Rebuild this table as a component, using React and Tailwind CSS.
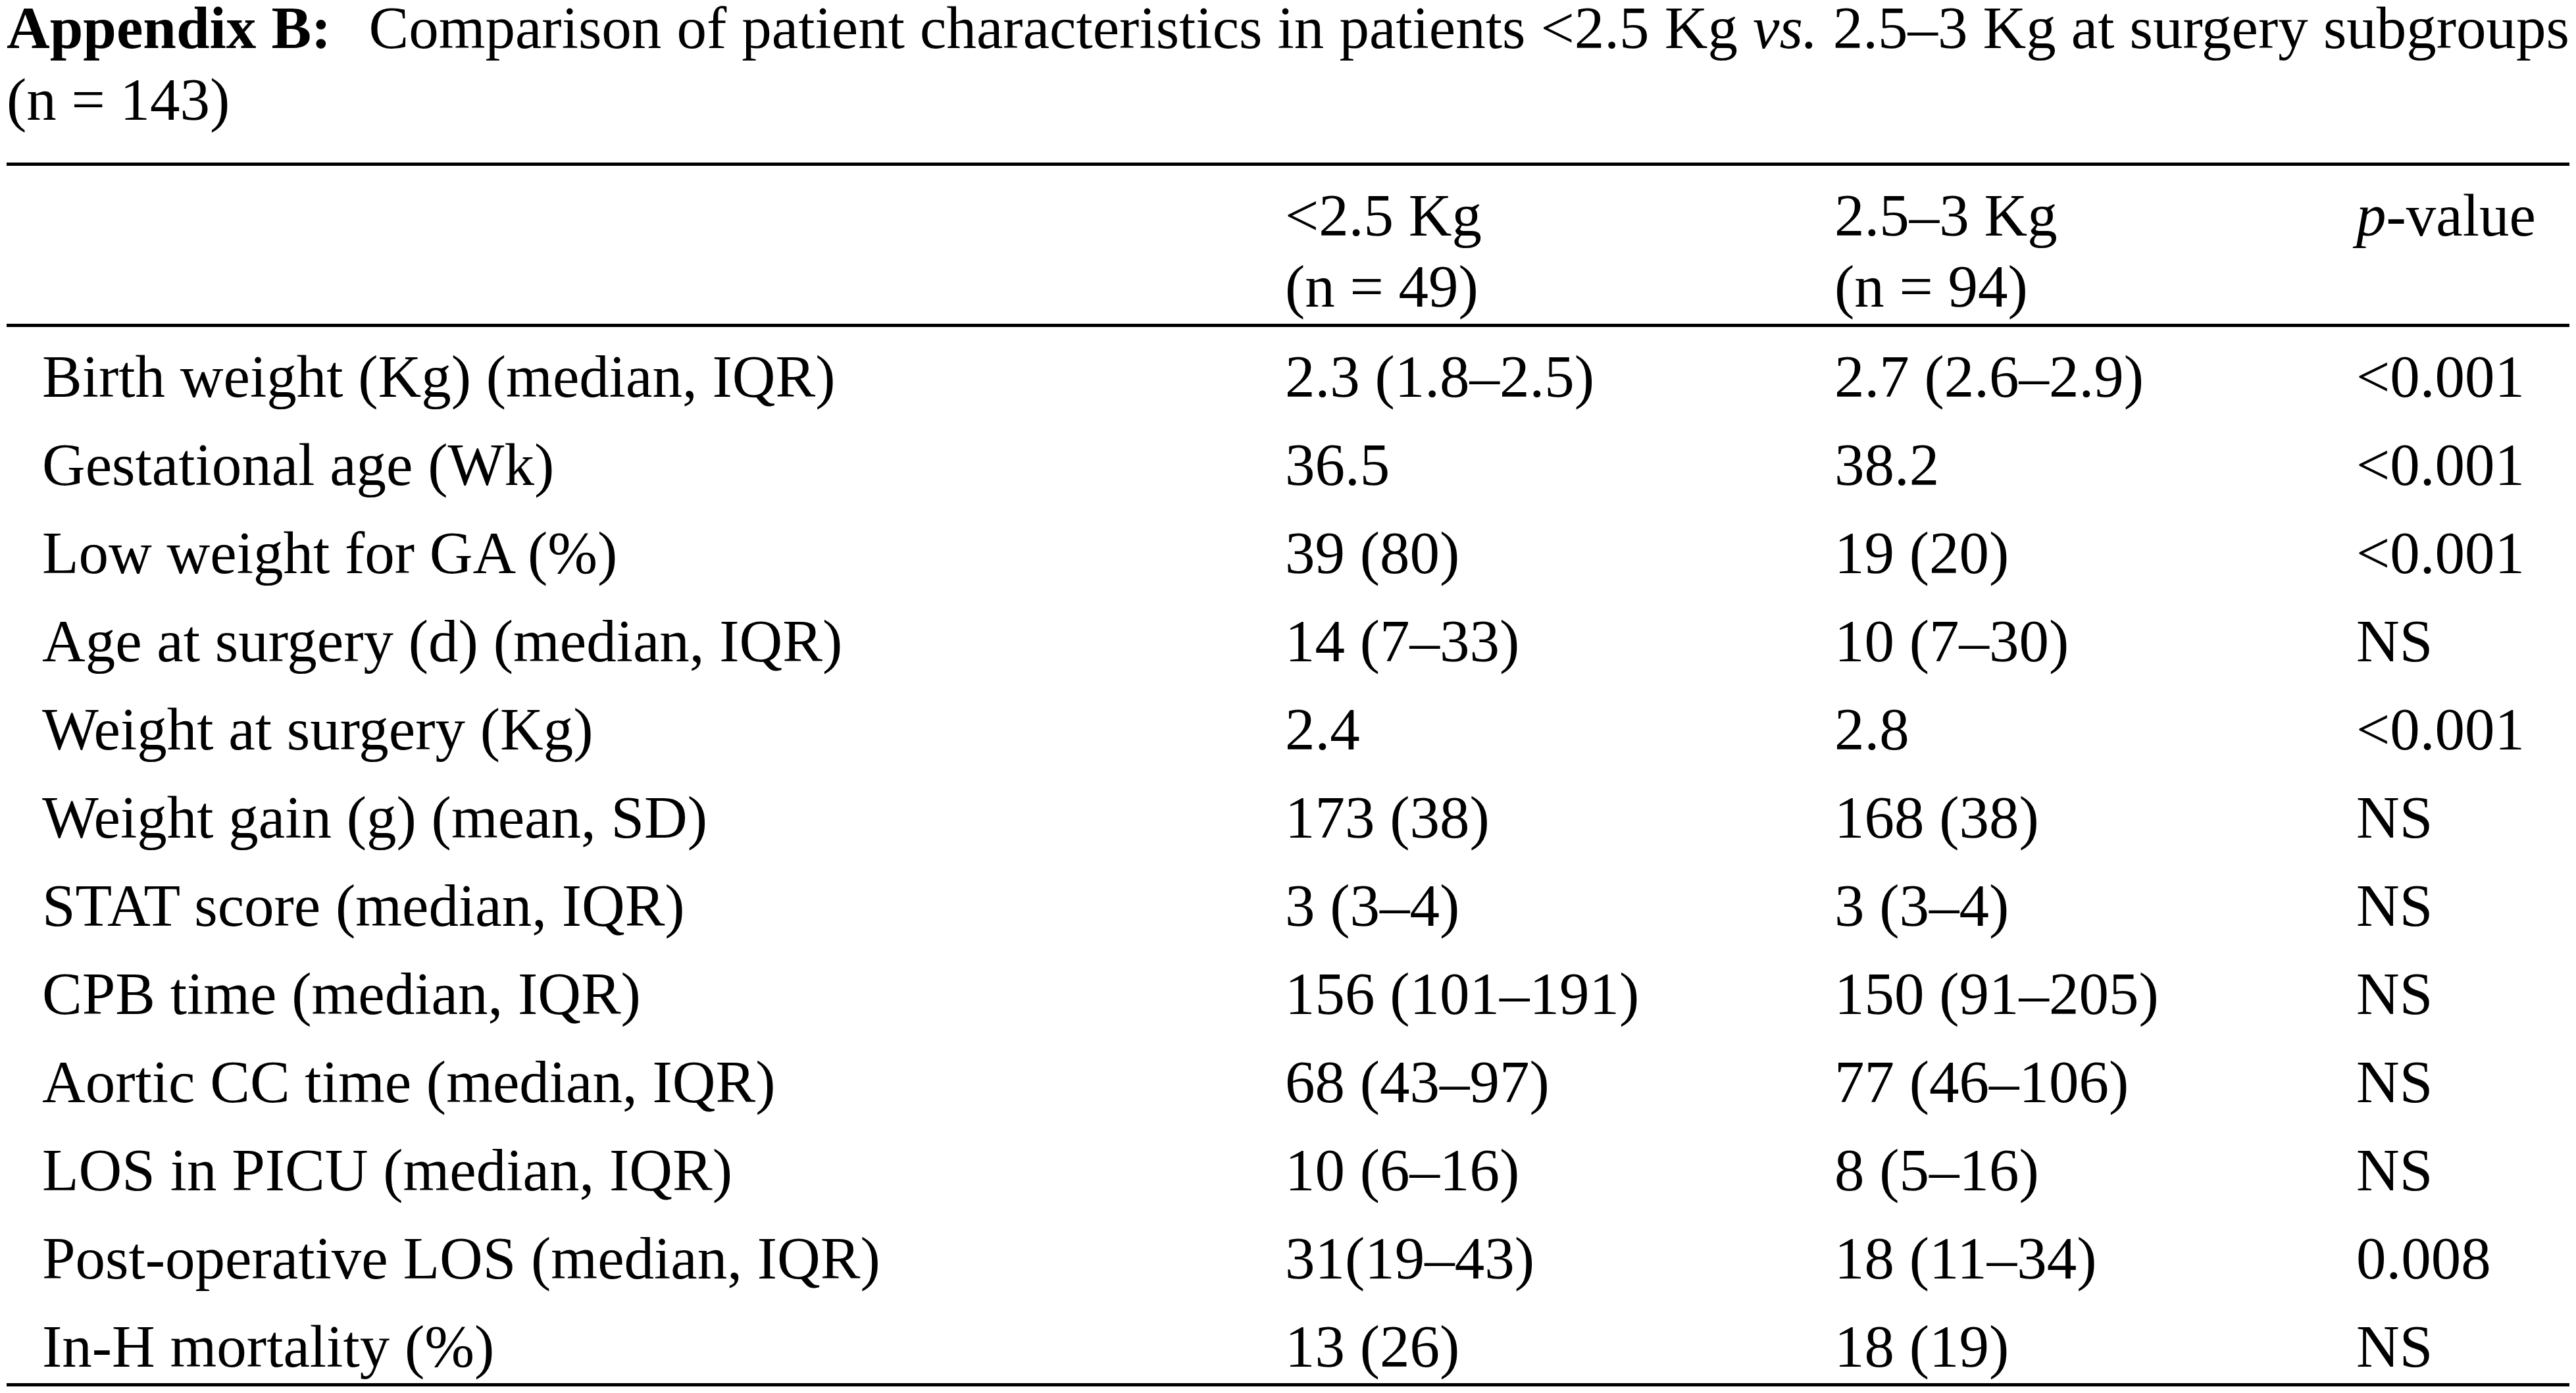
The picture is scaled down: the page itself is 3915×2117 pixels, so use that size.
import React from "react";

const rows = [
  ["Birth weight (Kg) (median, IQR)", "2.3 (1.8–2.5)", "2.7 (2.6–2.9)", "<0.001"],
  ["Gestational age (Wk)", "36.5", "38.2", "<0.001"],
  ["Low weight for GA (%)", "39 (80)", "19 (20)", "<0.001"],
  ["Age at surgery (d) (median, IQR)", "14 (7–33)", "10 (7–30)", "NS"],
  ["Weight at surgery (Kg)", "2.4", "2.8", "<0.001"],
  ["Weight gain (g) (mean, SD)", "173 (38)", "168 (38)", "NS"],
  ["STAT score (median, IQR)", "3 (3–4)", "3 (3–4)", "NS"],
  ["CPB time (median, IQR)", "156 (101–191)", "150 (91–205)", "NS"],
  ["Aortic CC time (median, IQR)", "68 (43–97)", "77 (46–106)", "NS"],
  ["LOS in PICU (median, IQR)", "10 (6–16)", "8 (5–16)", "NS"],
  ["Post-operative LOS (median, IQR)", "31(19–43)", "18 (11–34)", "0.008"],
  ["In-H mortality (%)", "13 (26)", "18 (19)", "NS"],
];

const cols = "grid grid-cols-[1943px_835px_793px_1fr]";

export default function App() {
  return (
    <div className="w-[3915px] h-[2117px] bg-white text-black px-[10px] flex flex-col font-['Liberation_Serif','Times_New_Roman',serif] text-[91px] overflow-hidden">
      {/* caption, broken where the printed one breaks */}
      <div className="leading-[86px] text-justify [text-align-last:justify] whitespace-nowrap">
        <span className="font-bold">Appendix B:</span>
        <span className="inline-block w-[34px]" /> Comparison of patient characteristics in patients &lt;2.5 Kg{" "}
        <i>vs.</i> 2.5–3 Kg at surgery subgroups
      </div>
      <div className="mt-[11px] leading-[109px]">(n = 143)</div>

      <div className="mt-[41px] h-[5px] bg-black" />

      {/* header */}
      <div className={`${cols} pt-[22px] pb-[2px] leading-[108px]`}>
        <div />
        <div>
          <div>&lt;2.5 Kg</div>
          <div>(n = 49)</div>
        </div>
        <div>
          <div>2.5–3 Kg</div>
          <div>(n = 94)</div>
        </div>
        <div>
          <i>p</i>-value
        </div>
      </div>

      <div className="h-[5px] bg-black" />

      {/* body */}
      {rows.map((r, i) => (
        <div
          key={r[0]}
          className={`${cols} pt-[22px] leading-[108px] whitespace-nowrap ${i === rows.length - 1 ? "pb-[1px]" : "pb-[4px]"}`}
        >
          <div className="pl-[54px]">{r[0]}</div>
          <div>{r[1]}</div>
          <div>{r[2]}</div>
          <div>{r[3]}</div>
        </div>
      ))}

      <div className="h-[5px] bg-black" />
    </div>
  );
}
